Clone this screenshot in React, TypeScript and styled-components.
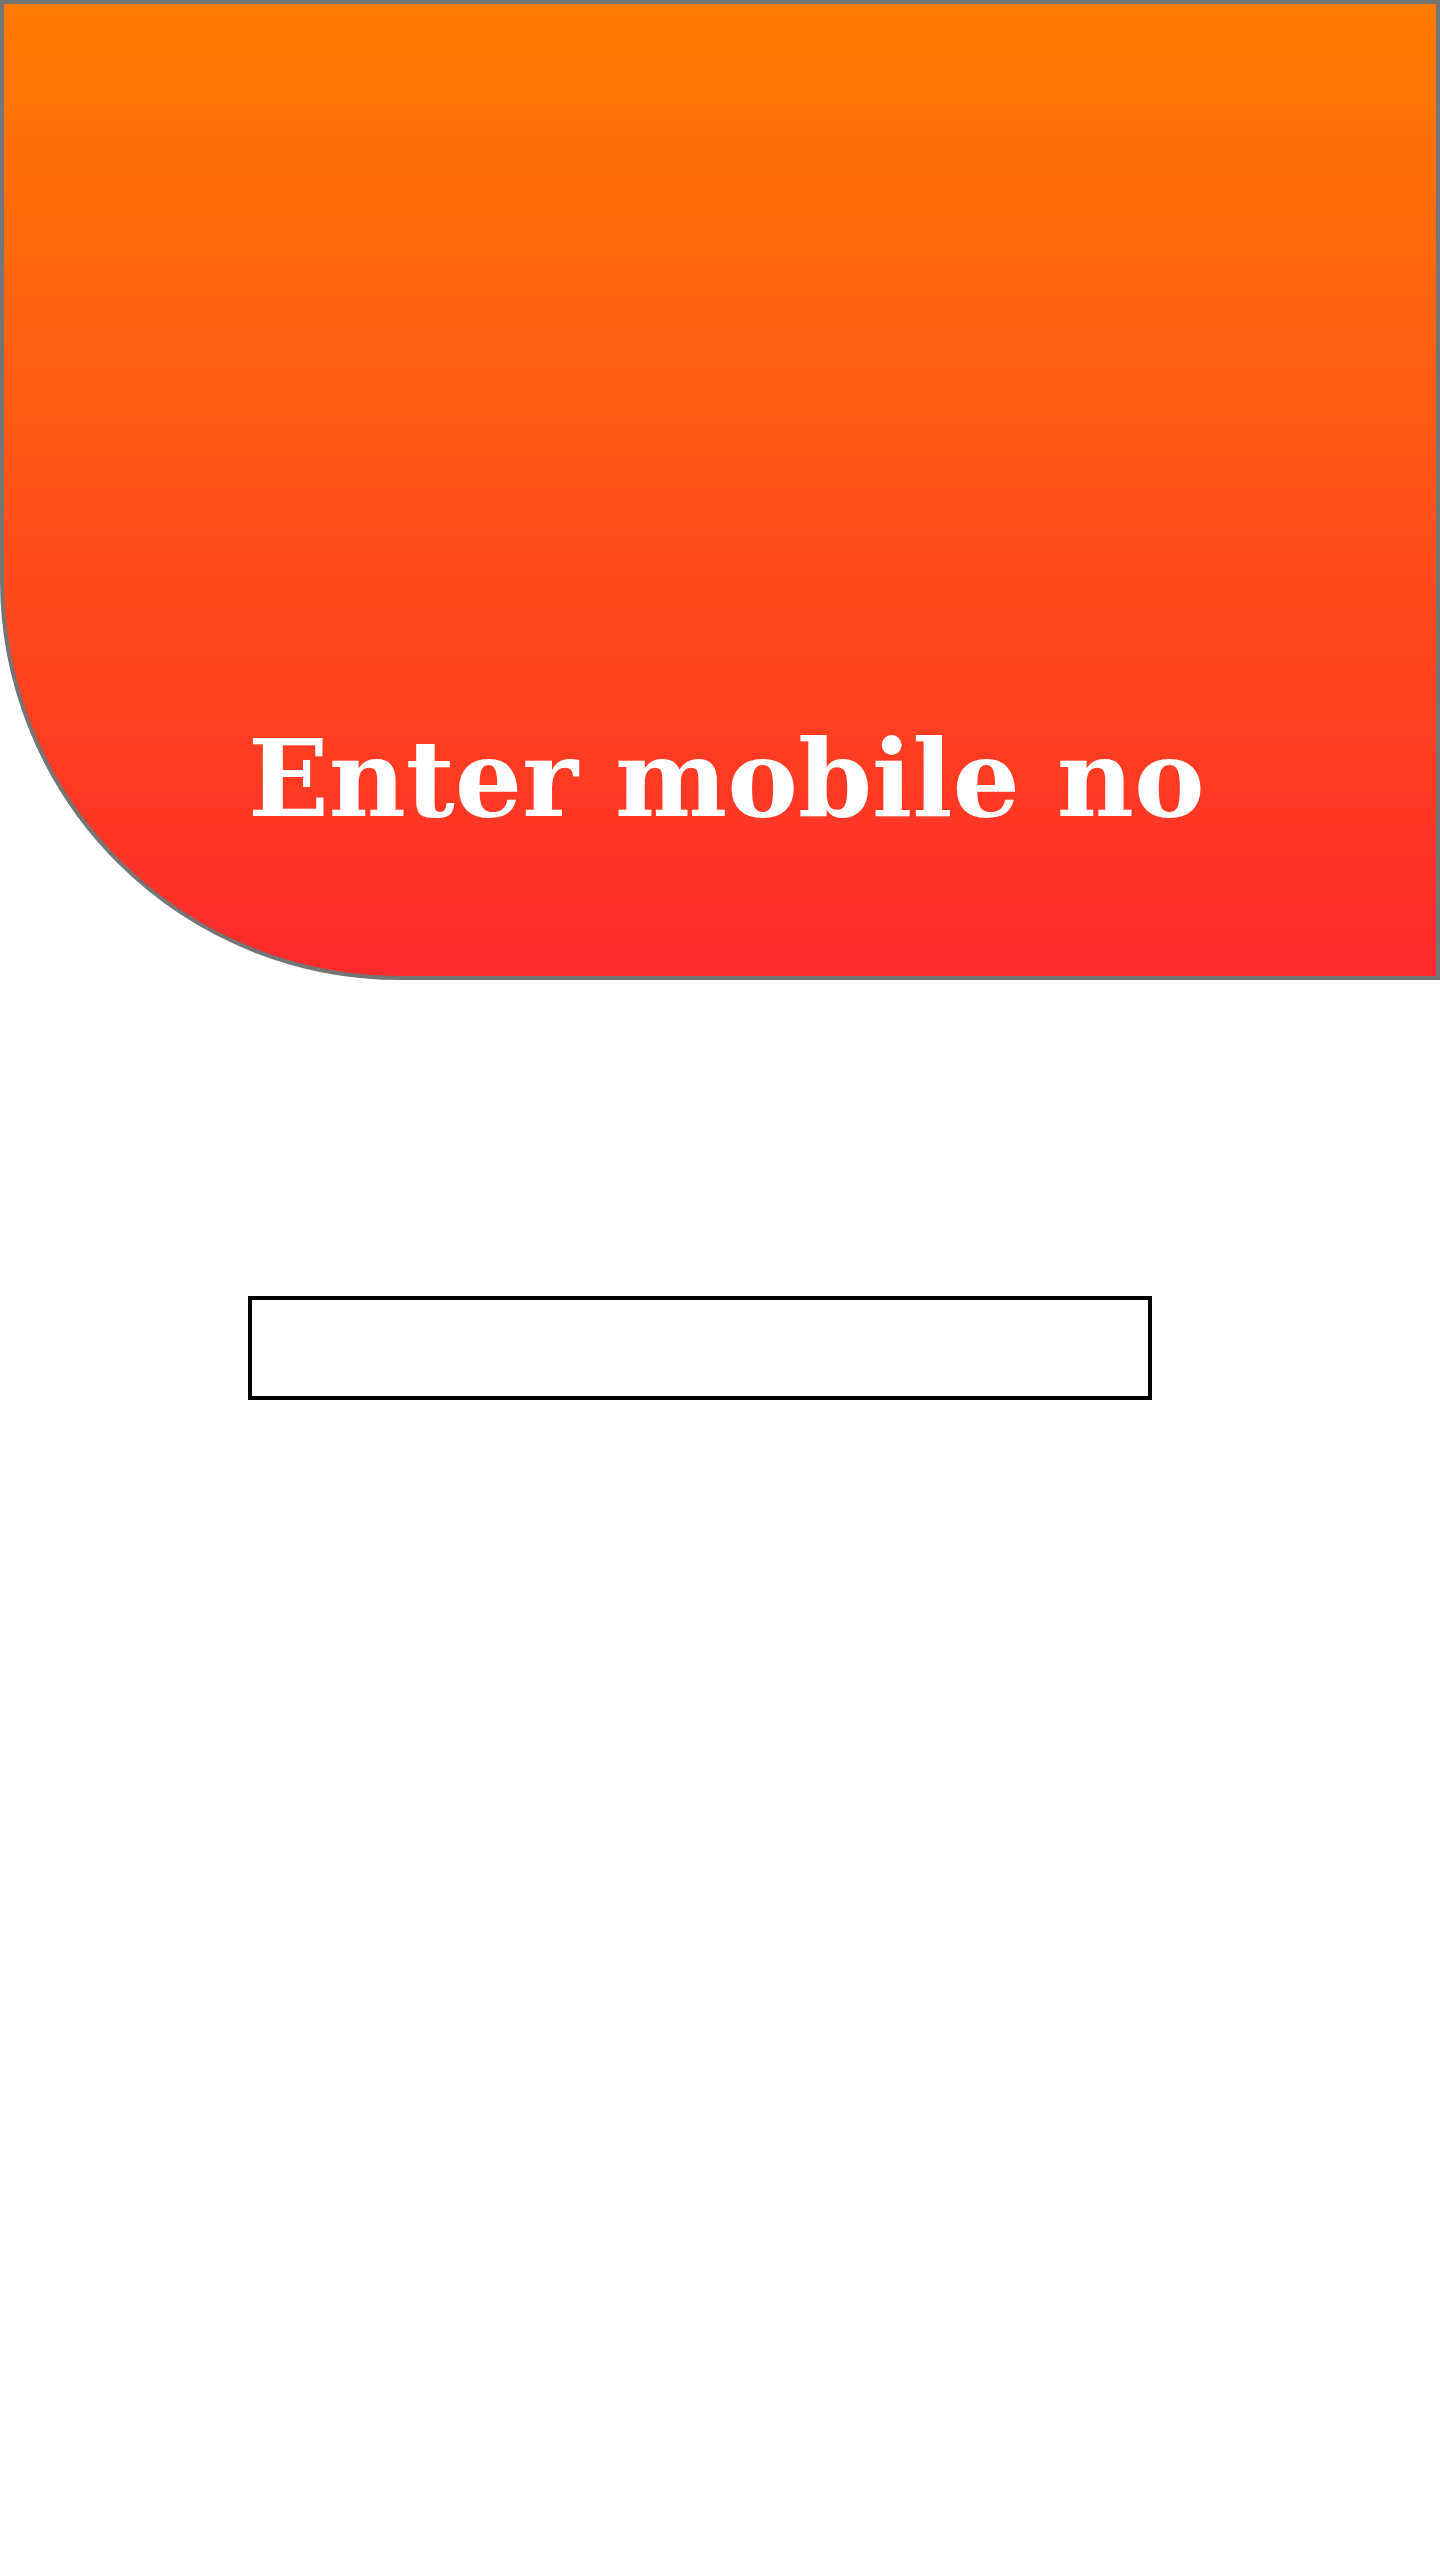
import React from "react";
import styled, { createGlobalStyle } from "styled-components";

const Global = createGlobalStyle`
  html, body { margin: 0; padding: 0; background: #ffffff; }
  body { font-family: "DejaVu Serif", serif; }
`;

const Page = styled.div`
  width: 1440px;
  min-height: 2560px;
  background: #ffffff;
  display: flex;
  flex-direction: column;
`;

const Header = styled.header`
  box-sizing: border-box;
  width: 1440px;
  height: 980px;
  border: 4px solid #757575;
  border-bottom-left-radius: 400px;
  background: linear-gradient(180deg, #ff7b03 0%, #ff4b1b 60%, #ff2a2c 100%);
  display: flex;
  align-items: flex-end;
  padding: 0 0 144px 244px;
`;

const Title = styled.h1`
  margin: 0;
  font-family: "DejaVu Serif", serif;
  font-weight: 700;
  font-size: 106px;
  line-height: 1;
  color: #ffffff;
  white-space: nowrap;
`;

const Field = styled.input`
  box-sizing: border-box;
  display: block;
  margin: 316px 0 0 248px;
  width: 904px;
  height: 104px;
  border: 4px solid #000000;
  border-radius: 0;
  background: #ffffff;
  outline: none;
  padding: 0 16px;
  font-family: "DejaVu Sans", sans-serif;
  font-size: 40px;
`;

export default function App() {
  return (
    <>
      <Global />
      <Page>
        <Header>
          <Title>Enter mobile no</Title>
        </Header>
        <Field type="tel" aria-label="Mobile number" />
      </Page>
    </>
  );
}
